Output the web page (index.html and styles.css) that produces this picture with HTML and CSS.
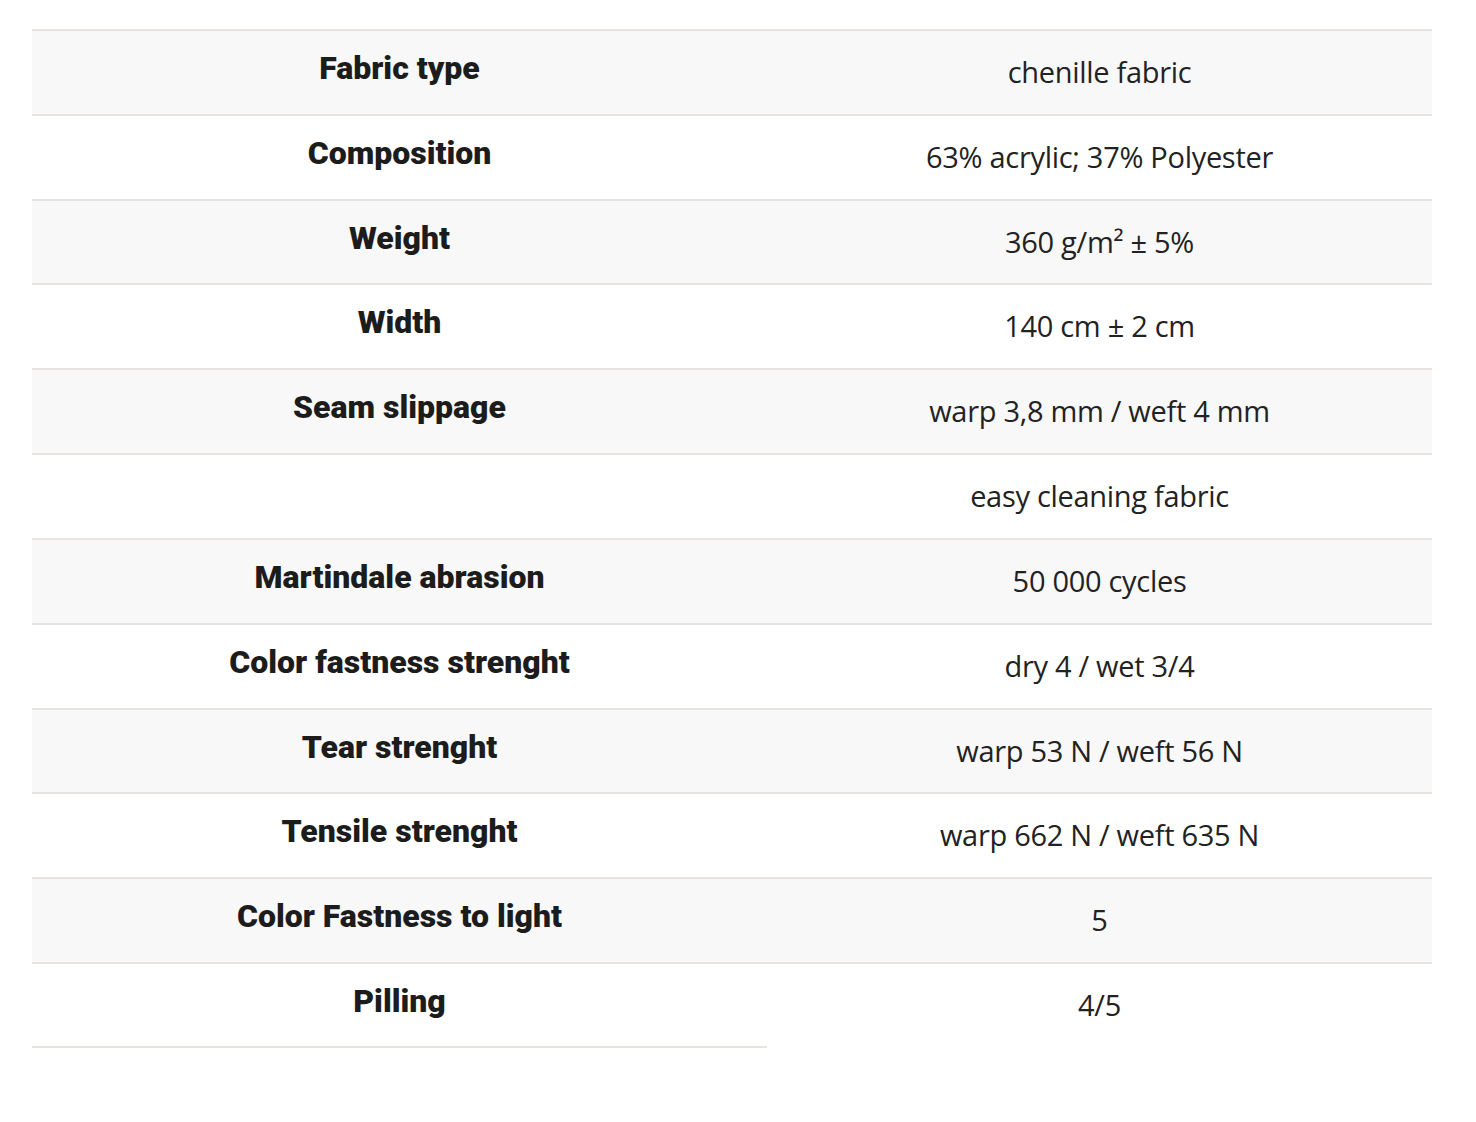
FILE: index.html
```html
<!DOCTYPE html>
<html>
<head>
<meta charset="utf-8">
<link rel="stylesheet" href="styles.css">
</head>
<body>
<div class="wrap">
<table class="specs">
<tbody>
<tr><th>Fabric type</th><td>chenille fabric</td></tr>
<tr><th>Composition</th><td>63% acrylic; 37% Polyester</td></tr>
<tr><th>Weight</th><td>360 g/m² ± 5%</td></tr>
<tr><th>Width</th><td>140 cm ± 2 cm</td></tr>
<tr><th>Seam slippage</th><td>warp 3,8 mm / weft 4 mm</td></tr>
<tr><th></th><td>easy cleaning fabric</td></tr>
<tr><th>Martindale abrasion</th><td>50 000 cycles</td></tr>
<tr><th>Color fastness strenght</th><td>dry 4 / wet 3/4</td></tr>
<tr><th>Tear strenght</th><td>warp 53 N / weft 56 N</td></tr>
<tr><th>Tensile strenght</th><td>warp 662 N / weft 635 N</td></tr>
<tr><th>Color Fastness to light</th><td>5</td></tr>
<tr class="last"><th>Pilling</th><td>4/5</td></tr>
</tbody>
</table>
</div>
</body>
</html>
```
FILE: styles.css
```css
html, body {
  margin: 0;
  padding: 0;
  background: #ffffff;
}
.wrap {
  padding: 29px 44px 0 32px;
}
.specs {
  width: 1400px;
  border-collapse: separate;
  border-spacing: 0;
  color: #1e1e1e;
}
.specs tr:nth-child(odd) {
  background: #f8f8f8;
}
.specs th, .specs td {
  border-bottom: 2px solid #e6e3e1;
  text-align: center;
  vertical-align: top;
  line-height: 40px;
}
.specs tr:first-child th, .specs tr:first-child td {
  border-top: 2px solid #e6e3e1;
}
.specs th {
  width: 735px;
  padding: 17px 0 25px;
  font-family: "Roboto", "Liberation Sans", sans-serif;
  font-weight: 900;
  font-size: 32px;
  color: #1c1c1c;
}
.specs td {
  padding: 21px 0 21.83px;
  font-family: "Open Sans", "Noto Sans", sans-serif;
  font-weight: 400;
  font-size: 29px;
  letter-spacing: -0.3px;
  color: #222;
}
.specs tr.last td {
  border-bottom: none;
}
```
